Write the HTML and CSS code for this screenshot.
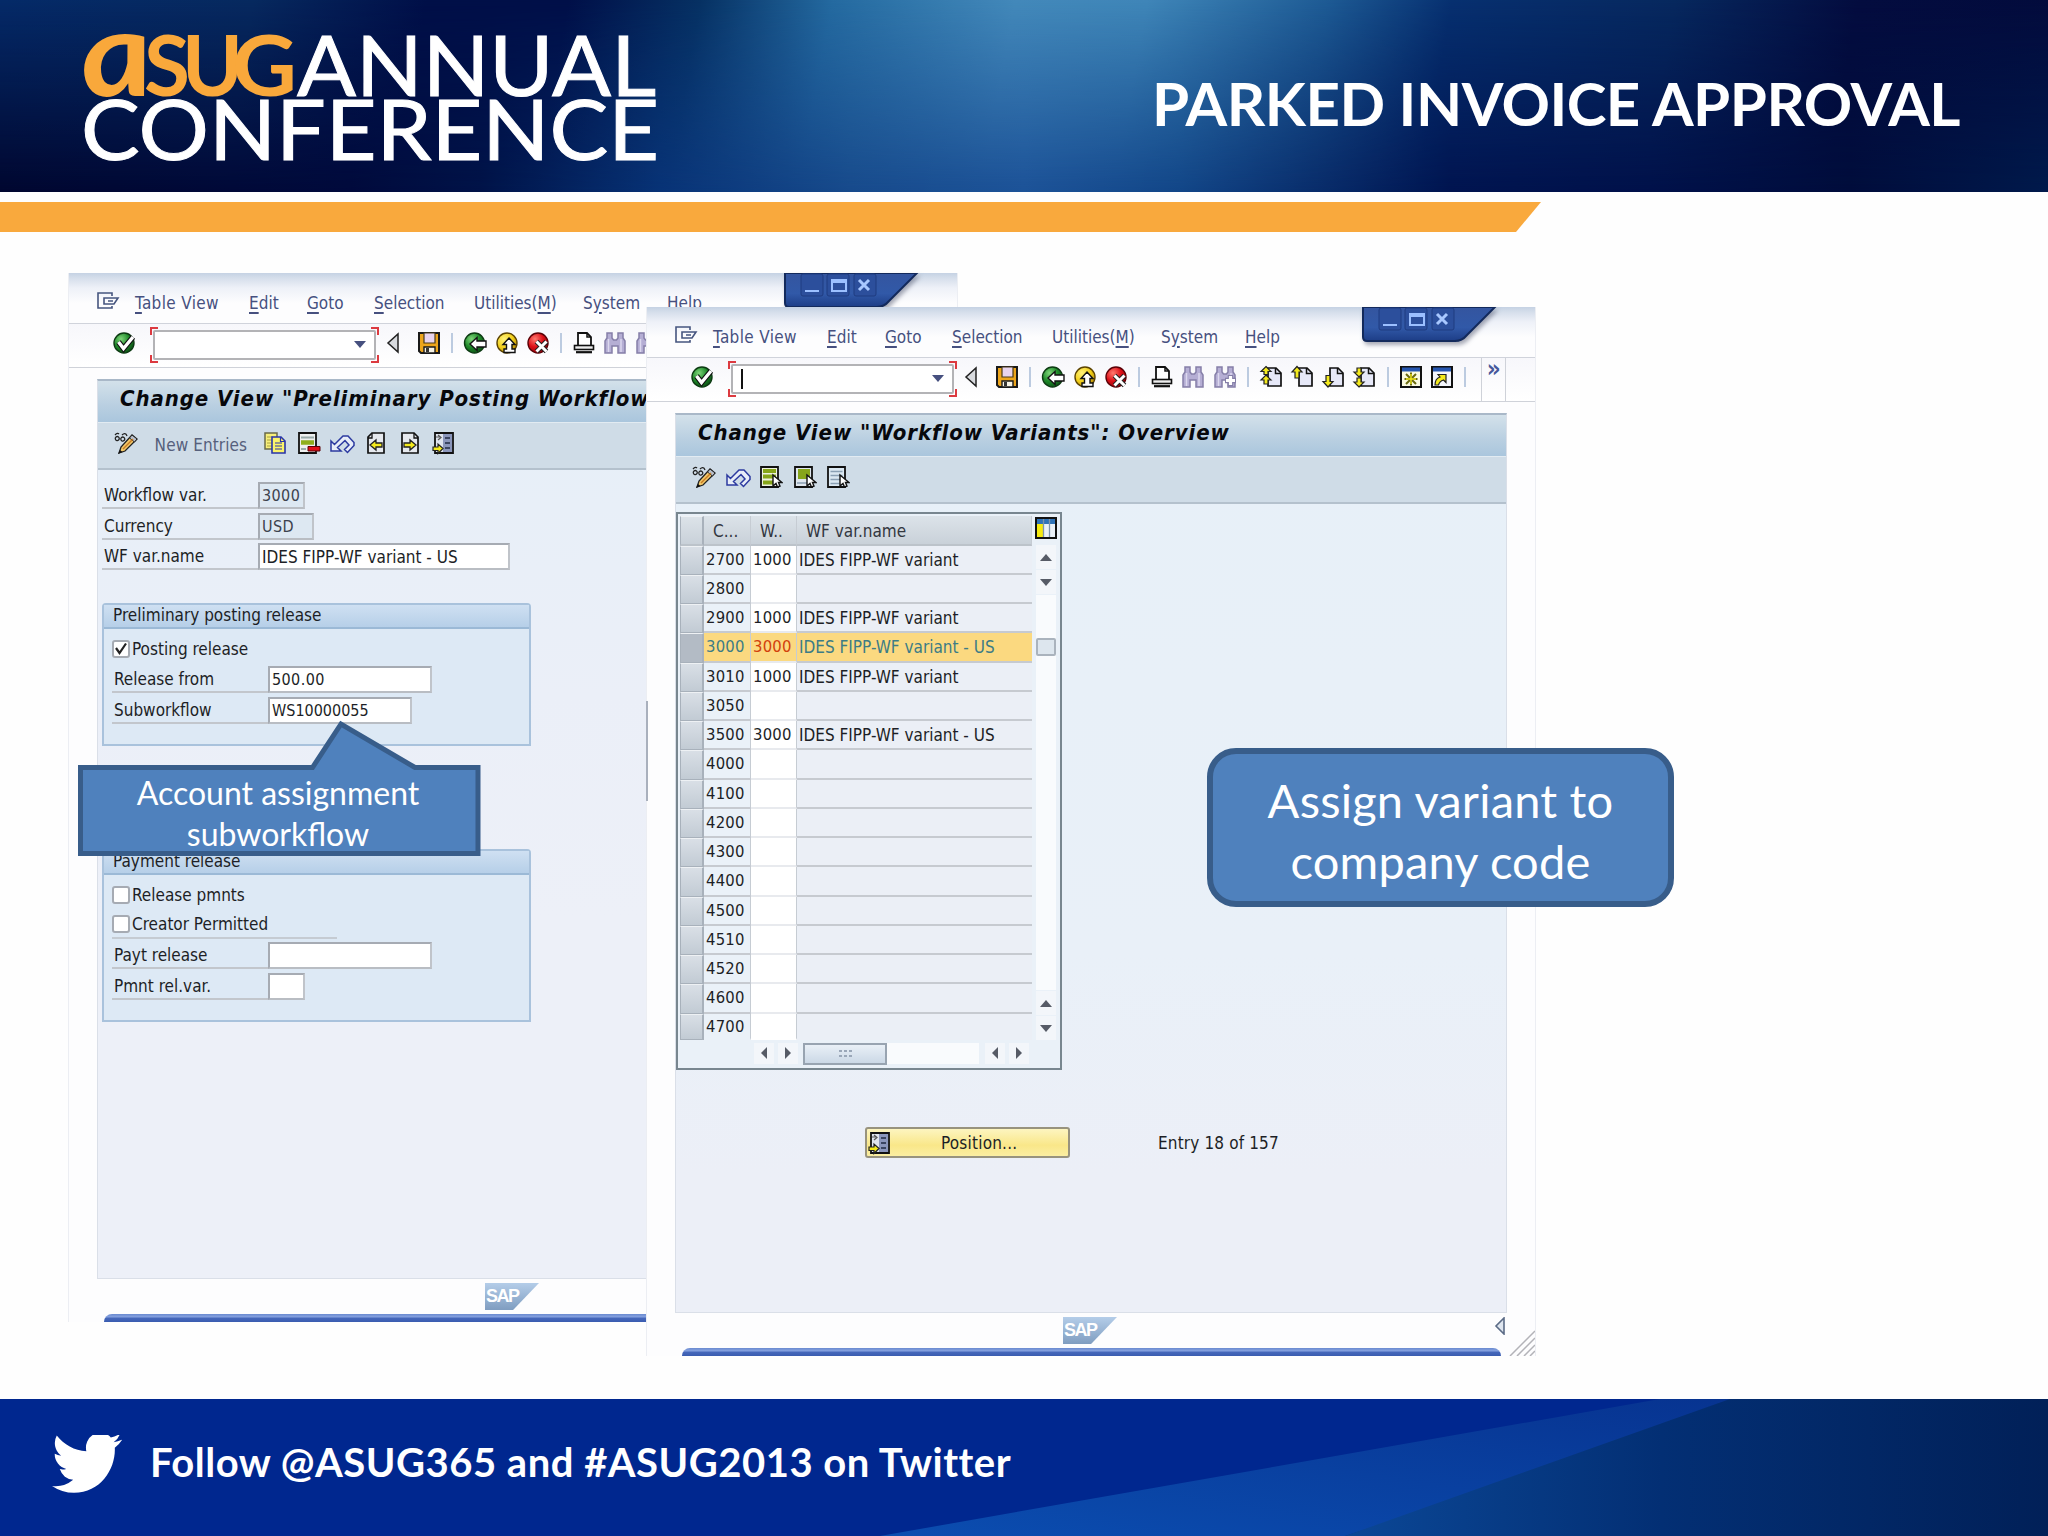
FILE: index.html
```html
<!DOCTYPE html>
<html lang="en">
<head>
<meta charset="utf-8">
<title>Parked Invoice Approval</title>
<link rel="stylesheet" href="styles.css">
</head>
<body>
<svg class="defs" width="0" height="0" aria-hidden="true">
  <defs>
    <radialGradient id="g-green" cx=".35" cy=".3" r=".8"><stop offset="0" stop-color="#7fd67a"/><stop offset=".5" stop-color="#1f8a2a"/><stop offset="1" stop-color="#0a4a12"/></radialGradient>
    <radialGradient id="g-yellow" cx=".35" cy=".3" r=".8"><stop offset="0" stop-color="#fff27a"/><stop offset=".55" stop-color="#f2cf1a"/><stop offset="1" stop-color="#a87a00"/></radialGradient>
    <radialGradient id="g-red" cx=".35" cy=".3" r=".8"><stop offset="0" stop-color="#ff7a70"/><stop offset=".5" stop-color="#dd1018"/><stop offset="1" stop-color="#8a0008"/></radialGradient>
    <linearGradient id="g-tab" x1="0" y1="0" x2="0" y2="1"><stop offset="0" stop-color="#34559f"/><stop offset=".6" stop-color="#3159a8"/><stop offset="1" stop-color="#1d3d86"/></linearGradient>
    <linearGradient id="g-sap" x1="0" y1="0" x2="0" y2="1"><stop offset="0" stop-color="#b4cde9"/><stop offset="1" stop-color="#7f9dc0"/></linearGradient>
  </defs>
  <symbol id="i-menu" viewBox="0 0 24 20"><path d="M16 5V2H2v15h14v-2M8 7h14l-4 6H8zM12 10h5" fill="none" stroke="#46557f" stroke-width="1.6"/></symbol>
  <symbol id="i-ok" viewBox="0 0 24 24"><circle cx="12" cy="12" r="10" fill="url(#g-green)" stroke="#0c3a12" stroke-width="1.4"/><path d="M6.500 11l5 6.500L21 6" fill="none" stroke="#111" stroke-width="5.500"/><path d="M6.500 11l5 6.500L21 6" fill="none" stroke="#fff" stroke-width="3.400"/></symbol>
  <symbol id="i-tri" viewBox="0 0 14 22"><path d="M12 2v18L2 11z" fill="#d8dade" stroke="#222" stroke-width="1.500"/></symbol>
  <symbol id="i-save" viewBox="0 0 24 24"><path d="M2 2h20v20H4l-2-2z" fill="#eda51c" stroke="#1a1a1a" stroke-width="2"/><path d="M7 2h11v10H7z" fill="#e8d4ee" stroke="#4a3a1a" stroke-width="1.200"/><path d="M7 16h11v6H7z" fill="#f7f3e6" stroke="#1a1a1a" stroke-width="1.400"/><path d="M9 17h3v4H9z" fill="#333"/></symbol>
  <symbol id="i-back" viewBox="0 0 24 24"><circle cx="11.500" cy="12" r="10" fill="url(#g-green)" stroke="#0c3a12" stroke-width="1.400"/><path d="M7 13l7-6.500V10h9v6h-9v3.500z" fill="#fff" stroke="#111" stroke-width="1.400"/></symbol>
  <symbol id="i-up" viewBox="0 0 24 24"><circle cx="12" cy="12" r="10" fill="url(#g-yellow)" stroke="#5b4300" stroke-width="1.400"/><path d="M14 7l6 6.500h-3V18h3v3.500H9V18h2.500v-4.500H8z" fill="#fff" stroke="#111" stroke-width="1.400"/></symbol>
  <symbol id="i-cancel" viewBox="0 0 24 24"><circle cx="12" cy="12" r="10" fill="url(#g-red)" stroke="#5a0006" stroke-width="1.400"/><path d="M10.500 10.500l10 10M20.500 10.500l-10 10" stroke="#222" stroke-width="5"/><path d="M10.500 10.500l10 10M20.500 10.500l-10 10" stroke="#fff" stroke-width="3"/></symbol>
  <symbol id="i-print" viewBox="0 0 24 24"><path d="M6 2h9l4 4v9H6z" fill="#fff" stroke="#111" stroke-width="1.800"/><path d="M15 2v4h4" fill="none" stroke="#111" stroke-width="1.500"/><rect x="2.500" y="14.500" width="19" height="4" fill="#eee" stroke="#111" stroke-width="1.600"/><path d="M4 21.200h16" stroke="#111" stroke-width="2.200"/></symbol>
  <symbol id="i-find" viewBox="0 0 24 24"><path d="M4 2h5v5l1.500 2h3L15 7V2h5v5l2 3v12h-7v-7H9v7H2V10l2-3z" fill="#b5aed4" stroke="#857fa8" stroke-width="1.500"/><path d="M5.500 8v13M18 8v13" stroke="#dcd8ee" stroke-width="1.500"/></symbol>
  <symbol id="i-findnext" viewBox="0 0 24 24"><use href="#i-find"/><path d="M17.500 10v11M12 15.500h11" stroke="#857fa8" stroke-width="5.500"/><path d="M17.500 11v9M13 15.500h9" stroke="#fff" stroke-width="3.200"/></symbol>
  <symbol id="i-sheet" viewBox="0 0 24 24"><path d="M9 3h8l5 5v13H9z" fill="#e6e8f8" stroke="#111" stroke-width="1.700"/><path d="M16.500 3v5.500H22" fill="none" stroke="#111" stroke-width="1.500"/></symbol>
  <symbol id="i-p1" viewBox="0 0 24 24"><use href="#i-sheet"/><path d="M7 1.500l5 5H9v3H5v-3H2zM7 10l5 5H9v4H5v-4H2z" fill="#f4ea1c" stroke="#222" stroke-width="1.200"/></symbol>
  <symbol id="i-p2" viewBox="0 0 24 24"><use href="#i-sheet"/><path d="M7 1.500l5 5.500H9v6H5V7H2z" fill="#f4ea1c" stroke="#222" stroke-width="1.200"/></symbol>
  <symbol id="i-p3" viewBox="0 0 24 24"><use href="#i-sheet"/><path d="M7 22l5-5.500H9v-6H5v6H2z" fill="#f4ea1c" stroke="#222" stroke-width="1.200"/></symbol>
  <symbol id="i-p4" viewBox="0 0 24 24"><use href="#i-sheet"/><path d="M7 12l5-5H9V3H5v4H2zM7 22l5-5H9v-4H5v4H2z" fill="#f4ea1c" stroke="#222" stroke-width="1.200"/></symbol>
  <symbol id="i-w1" viewBox="0 0 24 24"><path d="M2 2h20v20H2z" fill="#fbfbe0" stroke="#111" stroke-width="2"/><path d="M3 4.500h18" stroke="#2656b0" stroke-width="4"/><path d="M12 7.500v13M5.500 14h13M7 9l10 10M17 9L7 19" stroke="#6a6a10" stroke-width="2"/><path d="M12 9v10M7 14h10" stroke="#f4ea1c" stroke-width="1.400"/></symbol>
  <symbol id="i-w2" viewBox="0 0 24 24"><path d="M2 2h20v20H2z" fill="#f4f6fc" stroke="#111" stroke-width="2"/><path d="M3 4.500h18" stroke="#2656b0" stroke-width="4"/><path d="M5 20c0-5 2-7 5-8L8 9.500h8v8L13.500 15C10 16 9 18 8.500 20z" fill="#f4ea1c" stroke="#222" stroke-width="1.200"/></symbol>
  <symbol id="i-pencil" viewBox="0 0 26 24"><path d="M2 4c2-2 3-2 4-1M2.500 8.500a2 2 0 1 0 3-2.500 2 2 0 0 0-3 2.500M8 9a2 2 0 1 0 3-2.500A2 2 0 0 0 8 9M9 4c2-2 4-2 5 1" fill="none" stroke="#222" stroke-width="1.300"/><path d="M6 22l2-6L19 4l5 4-12 12z" fill="#f3c96a" stroke="#222" stroke-width="1.300"/><path d="M19 4l5 4-2.500 3-5-4z" fill="#b9c0cc" stroke="#222"/><path d="M10 18L20 8" stroke="#c87b22" stroke-width="1.500"/><path d="M5 23l2-4 2.500 2z" fill="#111"/></symbol>
  <symbol id="i-copy" viewBox="0 0 24 24"><path d="M2 2h12v16H2z" fill="#f7ef7a" stroke="#6a6a4a" stroke-width="1.500"/><path d="M4 6h6M4 9h6M4 12h6M4 15h5" stroke="#a8a040"/><path d="M9 6h9l4 4v12H9z" fill="#fbf36a" stroke="#2a35a8" stroke-width="1.600"/><path d="M17.500 6v4.500H22M12 12h7M12 15h7M12 18h7" fill="none" stroke="#2a35a8" stroke-width="1.200"/></symbol>
  <symbol id="i-del" viewBox="0 0 24 24"><path d="M2 2h17v20H2z" fill="#eef0f0" stroke="#111" stroke-width="1.800"/><path d="M4 6.500h13" stroke="#9aa" stroke-width="2"/><path d="M4 11.500h13" stroke="#8fae1c" stroke-width="4.500"/><path d="M4 18h5" stroke="#9aa" stroke-width="2"/><path d="M11 15.500h12v4.500H11z" fill="#e01018" stroke="#5a0006"/></symbol>
  <symbol id="i-undo" viewBox="0 0 26 24"><path d="M2 10v10h10l-3.500-3.500L16 9.500l4 4.500-4.500 4.500 3 3L25 14.500v-3L19 5h-5L5.500 13.500z" fill="#e8edf8" stroke="#2c3aa0" stroke-width="1.500"/></symbol>
  <symbol id="i-prev" viewBox="0 0 24 24"><path d="M4 6l4-4h12v20H4z" fill="#e6e9ee" stroke="#111" stroke-width="1.700"/><path d="M4 7h4V2" fill="none" stroke="#111" stroke-width="1.300"/><path d="M6 14l6-5v3h6v4h-6v3z" fill="#f4ea1c" stroke="#222" stroke-width="1.300"/></symbol>
  <symbol id="i-next" viewBox="0 0 24 24"><path d="M4 2h12l4 4v16H4z" fill="#e6e9ee" stroke="#111" stroke-width="1.700"/><path d="M20 7h-4V2" fill="none" stroke="#111" stroke-width="1.300"/><path d="M18 14l-6-5v3H6v4h6v3z" fill="#f4ea1c" stroke="#222" stroke-width="1.300"/></symbol>
  <symbol id="i-pos" viewBox="0 0 24 24"><path d="M4 2h18v20H4z" fill="#dfe4ee" stroke="#111" stroke-width="1.800"/><path d="M12 3h9v18h-9z" fill="#8b96bb"/><path d="M14 7h5M14 12h5M14 17h5" stroke="#222b44" stroke-width="1.600"/><path d="M5 6h5M7 4l3 2.500L7 9" fill="none" stroke="#555" stroke-width="1.200"/><path d="M12 17.500l-5-4.500v3H2v3.500h5v3z" fill="#f4ea1c" stroke="#222" stroke-width="1.200"/></symbol>
  <symbol id="i-cursor" viewBox="0 0 24 24"><path d="M14 10v11l3-2.500 1.500 3.500 2.500-1-1.500-3.500H23z" fill="#fff" stroke="#111" stroke-width="1.400"/></symbol>
  <symbol id="i-s1" viewBox="0 0 24 24"><path d="M2 2h17v20H2z" fill="#eef2e0" stroke="#111" stroke-width="1.800"/><path d="M4 6h13M4 11.500h13M4 17.500h13" stroke="#86a51a" stroke-width="4"/><use href="#i-cursor"/></symbol>
  <symbol id="i-s2" viewBox="0 0 24 24"><path d="M2 2h17v20H2z" fill="#dfe6ee" stroke="#111" stroke-width="1.800"/><path d="M5 4h12v10H5z" fill="#86a51a"/><path d="M4 18h10" stroke="#9fb0c0" stroke-width="2"/><use href="#i-cursor"/></symbol>
  <symbol id="i-s3" viewBox="0 0 24 24"><path d="M2 2h17v20H2z" fill="#dbe8f2" stroke="#111" stroke-width="1.800"/><path d="M4.500 6.500h12M4.500 10.500h12M4.500 14.500h12M4.500 18.500h9" stroke="#8aa0b4" stroke-width="1.500"/><use href="#i-cursor"/></symbol>
  <symbol id="i-cols" viewBox="0 0 22 22"><path d="M1 1h20v20H1z" fill="#eaf1f8" stroke="#111" stroke-width="2"/><path d="M2 4.500h18" stroke="#2f73b8" stroke-width="5"/><path d="M2 7h6v13H2z" fill="#f6ea10"/><path d="M8.500 2v18M14.500 2v18" stroke="#7d94ab" stroke-width="1.300"/></symbol>
  <symbol id="i-controls" viewBox="0 0 136 38">
    <path d="M2 0h132L106 28q-5 6-12 6H6q-4 0-4-4z" fill="url(#g-tab)" stroke="#132a5c" stroke-width="2"/>
    <g fill="#2c4f9c" stroke="#1f3c80"><rect x="18" y="1" width="22" height="22" rx="2"/><rect x="44" y="1" width="22" height="22" rx="2"/><rect x="71" y="1" width="22" height="22" rx="2"/></g>
    <path d="M22 18h14M49 7h14v11H49zM49 9h14" fill="none" stroke="#9cc0ff" stroke-width="2"/>
    <path d="M76 7l10 10M86 7L76 17" stroke="#a9c8ff" stroke-width="3"/>
  </symbol>
</svg>

<header class="banner">
  <svg class="logo" width="580" height="140" viewBox="0 0 580 140">
    <g font-family="Lato" fill="#f9a83b">
      <text transform="translate(1 75) skewX(8)" font-size="119" font-style="italic" font-weight="700" textLength="72" lengthAdjust="spacingAndGlyphs">a</text>
      <text x="60" y="75" font-size="84" font-weight="700" textLength="46" lengthAdjust="spacingAndGlyphs">S</text>
      <text x="98" y="75" font-size="84" font-weight="700" textLength="61" lengthAdjust="spacingAndGlyphs">U</text>
      <text x="148" y="75" font-size="84" font-weight="700" textLength="65" lengthAdjust="spacingAndGlyphs">G</text>
    </g>
    <g font-family="Lato" fill="#fff" stroke="#fff" stroke-width="1">
      <text x="213" y="75" font-size="83" textLength="359" lengthAdjust="spacingAndGlyphs">ANNUAL</text>
      <text x="-3" y="139" font-size="83" textLength="578" lengthAdjust="spacingAndGlyphs">CONFERENCE</text>
    </g>
  </svg>
  <h1>PARKED INVOICE APPROVAL</h1>
</header>
<div class="stripe"></div>

<main class="slide">
  <section class="win win-a">
    <svg class="controls" width="136" height="38"><use href="#i-controls"/></svg>
    <nav class="menu">
      <svg width="24" height="20"><use href="#i-menu"/></svg>
      <span class="m1"><u>T</u>able View</span><span><u>E</u>dit</span><span><u>G</u>oto</span><span><u>S</u>election</span><span>Utilities(<u>M</u>)</span><span>S<u>y</u>stem</span><span><u>H</u>elp</span>
    </nav>
    <div class="bar">
      <svg class="ic"><use href="#i-ok"/></svg>
      <div class="cmd"><i class="corner tl"></i><i class="corner tr"></i><i class="corner bl"></i><i class="corner br"></i><div class="cmd-box"><b class="dd"></b></div></div>
      <svg class="tri" width="14" height="22"><use href="#i-tri"/></svg>
      <div class="tools">
        <svg class="ic"><use href="#i-save"/></svg><i class="sep"></i>
        <svg class="ic"><use href="#i-back"/></svg><svg class="ic"><use href="#i-up"/></svg><svg class="ic"><use href="#i-cancel"/></svg><i class="sep"></i>
        <svg class="ic"><use href="#i-print"/></svg><svg class="ic"><use href="#i-find"/></svg><svg class="ic"><use href="#i-findnext"/></svg>
      </div>
    </div>
    <div class="panel">
      <h2>Change View "Preliminary Posting Workflow</h2>
      <div class="apps">
        <svg width="26" height="24"><use href="#i-pencil"/></svg>
        <span class="new">New Entries</span>
        <svg class="ic"><use href="#i-copy"/></svg><svg class="ic"><use href="#i-del"/></svg><svg width="26" height="24" class="wide"><use href="#i-undo"/></svg><svg class="ic"><use href="#i-prev"/></svg><svg class="ic"><use href="#i-next"/></svg><svg class="ic"><use href="#i-pos"/></svg>
      </div>
      <div class="form">
        <div class="row"><label>Workflow var.</label><div class="in ro num w47">3000</div></div>
        <div class="row"><label>Currency</label><div class="in ro num w56">USD</div></div>
        <div class="row"><label>WF var.name</label><div class="in w252">IDES FIPP-WF variant - US</div></div>
        <fieldset class="g1">
          <div class="cap">Preliminary posting release</div>
          <div class="check"><i class="box"><svg width="14" height="14" viewBox="0 0 14 14"><path d="M2 6l3.500 5L12 1.500" fill="none" stroke="#222" stroke-width="2.200"/></svg></i>Posting release</div>
          <div class="row"><label>Release from</label><div class="in num w164">500.00</div></div>
          <div class="row"><label>Subworkflow</label><div class="in num ws w144">WS10000055</div></div>
        </fieldset>
        <fieldset class="g2">
          <div class="cap">Payment release</div>
          <div class="check"><i class="box"></i>Release pmnts</div>
          <div class="check ul"><i class="box"></i>Creator Permitted</div>
          <div class="row"><label>Payt release</label><div class="in w164"></div></div>
          <div class="row"><label>Pmnt rel.var.</label><div class="in w37"></div></div>
        </fieldset>
      </div>
    </div>
    <footer class="status"><div class="sap">SAP</div></footer>
    <div class="edge"></div>
  </section>

  <section class="win win-b">
    <i class="splitter"></i>
    <svg class="controls" width="136" height="38"><use href="#i-controls"/></svg>
    <nav class="menu">
      <svg width="24" height="20"><use href="#i-menu"/></svg>
      <span class="m1"><u>T</u>able View</span><span><u>E</u>dit</span><span><u>G</u>oto</span><span><u>S</u>election</span><span>Utilities(<u>M</u>)</span><span>S<u>y</u>stem</span><span><u>H</u>elp</span>
    </nav>
    <div class="bar">
      <svg class="ic"><use href="#i-ok"/></svg>
      <div class="cmd"><i class="corner tl"></i><i class="corner tr"></i><i class="corner bl"></i><i class="corner br"></i><div class="cmd-box"><i class="caret"></i><b class="dd"></b></div></div>
      <svg class="tri" width="14" height="22"><use href="#i-tri"/></svg>
      <div class="tools">
        <svg class="ic"><use href="#i-save"/></svg><i class="sep"></i>
        <svg class="ic"><use href="#i-back"/></svg><svg class="ic"><use href="#i-up"/></svg><svg class="ic"><use href="#i-cancel"/></svg><i class="sep"></i>
        <svg class="ic"><use href="#i-print"/></svg><svg class="ic"><use href="#i-find"/></svg><svg class="ic"><use href="#i-findnext"/></svg><i class="sep"></i>
        <svg class="ic"><use href="#i-p1"/></svg><svg class="ic"><use href="#i-p2"/></svg><svg class="ic"><use href="#i-p3"/></svg><svg class="ic"><use href="#i-p4"/></svg><i class="sep"></i>
        <svg class="ic"><use href="#i-w1"/></svg><svg class="ic"><use href="#i-w2"/></svg><i class="sep"></i>
      </div>
      <div class="more">»</div>
    </div>
    <div class="panel">
      <h2>Change View "Workflow Variants": Overview</h2>
      <div class="apps">
        <svg width="26" height="24"><use href="#i-pencil"/></svg><svg width="26" height="24" class="wide"><use href="#i-undo"/></svg><svg class="ic"><use href="#i-s1"/></svg><svg class="ic"><use href="#i-s2"/></svg><svg class="ic"><use href="#i-s3"/></svg>
      </div>
      <div class="grid">
        <div class="rows">
          <div class="r head"><i></i><b>C...</b><b>W..</b><b>WF var.name</b></div>
          <div class="r"><i></i><b>2700</b><b>1000</b><span>IDES FIPP-WF variant</span></div>
          <div class="r"><i></i><b>2800</b><b></b><span></span></div>
          <div class="r"><i></i><b>2900</b><b>1000</b><span>IDES FIPP-WF variant</span></div>
          <div class="r sel"><i></i><b>3000</b><b>3000</b><span>IDES FIPP-WF variant - US</span></div>
          <div class="r"><i></i><b>3010</b><b>1000</b><span>IDES FIPP-WF variant</span></div>
          <div class="r"><i></i><b>3050</b><b></b><span></span></div>
          <div class="r"><i></i><b>3500</b><b>3000</b><span>IDES FIPP-WF variant - US</span></div>
          <div class="r"><i></i><b>4000</b><b></b><span></span></div>
          <div class="r"><i></i><b>4100</b><b></b><span></span></div>
          <div class="r"><i></i><b>4200</b><b></b><span></span></div>
          <div class="r"><i></i><b>4300</b><b></b><span></span></div>
          <div class="r"><i></i><b>4400</b><b></b><span></span></div>
          <div class="r"><i></i><b>4500</b><b></b><span></span></div>
          <div class="r"><i></i><b>4510</b><b></b><span></span></div>
          <div class="r"><i></i><b>4520</b><b></b><span></span></div>
          <div class="r"><i></i><b>4600</b><b></b><span></span></div>
          <div class="r last"><i></i><b>4700</b><b></b><span></span></div>
        </div>
        <div class="vbar">
          <svg width="24" height="24" viewBox="-1 -1 24 24"><use href="#i-cols" width="22" height="22"/></svg>
          <div class="btn"><i class="a up"></i></div><div class="btn"><i class="a down"></i></div>
          <div class="vtrack"><div class="vthumb"></div></div>
          <div class="btn"><i class="a up"></i></div><div class="btn"><i class="a down"></i></div>
        </div>
        <div class="hbar">
          <div class="btn"><i class="a left"></i></div><div class="btn"><i class="a right"></i></div>
          <div class="htrack"><div class="hthumb"><svg width="14" height="10" viewBox="0 0 14 10"><path d="M1 2h3M6 2h3M11 2h3M1 7h3M6 7h3M11 7h3" stroke="#9aa7b8" stroke-width="2"/></svg></div></div>
          <div class="btn"><i class="a left"></i></div><div class="btn"><i class="a right"></i></div>
        </div>
      </div>
      <div class="foot">
        <div class="position"><svg width="24" height="24"><use href="#i-pos"/></svg><span>Position...</span></div>
        <span>Entry 18 of 157</span>
      </div>
    </div>
    <footer class="status"><div class="sap">SAP</div><svg width="12" height="18" viewBox="0 0 12 18"><path d="M10 1v16L2 9z" fill="#dfe6ef" stroke="#5b6b86" stroke-width="1.600"/></svg></footer>
    <div class="edge"></div>
    <svg class="grip" width="26" height="26" viewBox="0 0 26 26"><path d="M1 26L26 1M8 26L26 8M15 26L26 15M21 26l5-5" stroke="#b3b3b8" stroke-width="1.500"/></svg>
  </section>

  <div class="callout">
    <svg width="404" height="138" viewBox="0 0 404 138"><path d="M2.500 48.500H234.500L263 5l74 43.500H400V134.500H2.500z" fill="#4f81bd" stroke="#385d8a" stroke-width="5"/></svg>
    <p>Account assignment<br>subworkflow</p>
  </div>
  <div class="bubble"><p>Assign variant to<br>company code</p></div>
</main>

<footer class="follow">
  <svg class="rays" width="2048" height="137" viewBox="0 0 2048 137" preserveAspectRatio="none">
    <defs>
      <linearGradient id="r1" x1="0" x2="1" y1="1" y2="0"><stop offset="0" stop-color="#0b4db0"/><stop offset="1" stop-color="#073390"/></linearGradient>
      <linearGradient id="r2" x1="0" x2="1"><stop offset="0" stop-color="#0b4796"/><stop offset=".45" stop-color="#032f74"/><stop offset="1" stop-color="#012058"/></linearGradient>
    </defs>
    <path d="M880 137L1660 0h100L1345 137z" fill="url(#r1)"/>
    <path d="M1345 137L1730 0h318v137z" fill="url(#r2)"/>
  </svg>
  <svg class="bird" width="70" height="60" viewBox="0 3 24 19.500" preserveAspectRatio="none"><path fill="#fff" d="M23.950 4.570a10 10 0 0 1-2.820.770 4.960 4.960 0 0 0 2.160-2.720c-.950.560-2 .960-3.130 1.180a4.920 4.920 0 0 0-8.390 4.480C7.690 8.100 4.070 6.130 1.640 3.160a4.820 4.820 0 0 0-.670 2.480c0 1.710.870 3.210 2.190 4.100a4.900 4.900 0 0 1-2.230-.620v.060a4.920 4.920 0 0 0 3.950 4.830 5 5 0 0 1-2.210.080 4.940 4.940 0 0 0 4.600 3.420A9.870 9.870 0 0 1 0 19.540a13.990 13.990 0 0 0 7.550 2.210c9.050 0 14-7.500 14-13.980 0-.210 0-.420-.020-.630a9.940 9.940 0 0 0 2.460-2.550z"/></svg>
  <span>Follow @ASUG365 and #ASUG2013 on Twitter</span>
</footer>
</body>
</html>
```
FILE: styles.css
```css
* { box-sizing: border-box; }
body {
  margin: 0;
  width: 2048px;
  height: 1536px;
  display: flex;
  flex-direction: column;
  overflow: hidden;
  background: #fefefe;
  font-family: "DejaVu Sans Condensed", "DejaVu Sans", sans-serif;
  font-size: 17px;
  color: #1d1f26;
}
.defs { position: absolute; }
svg { display: block; flex: none; }
i, b { font-style: normal; font-weight: 400; }
.ic { width: 24px; height: 24px; }

/* Banner */
.banner {
  position: relative;
  flex: none;
  height: 192px;
  display: flex;
  justify-content: space-between;
  padding: 21px 88px 0 84px;
  background: linear-gradient(90deg, #000730 0, #000a3c 350px, #001348 480px, #083377 660px, #174a8c 850px, #1c5298 1024px, #124688 1180px, #082a68 1330px, #001450 1450px, #00114a 1650px, #000d3c 1850px, #001a4c 2048px);
}
.banner::before {
  content: "";
  position: absolute;
  inset: 0;
  background: linear-gradient(100deg, #042a68 0, #06295f 250px, #000f48 420px, #000f48 560px, #063163 690px, #246aa0 820px, #4389ba 1000px, #3f86b8 1130px, #1d5a94 1310px, #063070 1430px, #06285e 1650px, #030c3f 1830px, #020b3c 2048px);
  -webkit-mask-image: linear-gradient(#000, transparent);
  mask-image: linear-gradient(#000, transparent);
}
.logo { position: relative; overflow: visible; }
.banner h1 {
  position: relative;
  margin: 0;
  padding-top: 42px;
  font: 700 60px/80px Lato, sans-serif;
  letter-spacing: -0.5px;
  color: #fff;
}
.stripe {
  flex: none;
  width: 1541px;
  height: 30px;
  margin-top: 10px;
  background: #f9a93d;
  clip-path: polygon(0 0, 100% 0, 1516px 100%, 0 100%);
}
.slide { flex: 1; }

/* Application windows */
.win {
  position: absolute;
  width: 890px;
  height: 1049px;
  display: flex;
  flex-direction: column;
  background: linear-gradient(#c5d2e3 0, #d5deeb 5px, #eef1f8 15px, #fdfdfe 30px, #fdfdfe 100%);
  border-left: 1px solid #eceef3;
  border-right: 1px solid #eceef3;
}
.win-a { left: 68px; top: 273px; }
.win-b { left: 646px; top: 307px; }
.controls { position: absolute; left: 714px; top: 0; filter: drop-shadow(2px 3px 2px rgba(80, 85, 110, .5)); }
.splitter { position: absolute; left: -1px; top: 394px; width: 2px; height: 100px; background: #a9b0bd; }

.menu {
  flex: none;
  height: 51px;
  display: grid;
  grid-template-columns: 39px 114px 58px 67px 100px 109px 84px auto;
  align-items: center;
  padding: 9px 0 0 27px;
  color: #46507f;
  border-bottom: 1px solid #d0d3db;
}
.menu svg { margin-top: -4px; }
.menu u { text-underline-offset: 3px; text-decoration-thickness: 1.500px; }
.m1 { letter-spacing: .35px; }

.bar {
  flex: none;
  height: 44px;
  display: flex;
  align-items: center;
  padding: 0 0 5px 43px;
  background: linear-gradient(#f7f7fb, #fff);
  border-bottom: 1px solid #cfd2d9;
}
.cmd { position: relative; width: 229px; height: 36px; margin: 3px 0 0 14px; padding: 3px; }
.cmd-box {
  height: 30px;
  display: flex;
  align-items: center;
  padding: 0 8px;
  background: #fff;
  border: 2px solid #b3b3b6;
  border-radius: 2px;
}
.caret { width: 2px; height: 20px; background: #111; }
.dd { margin-left: auto; border: 6px solid transparent; border-top: 7px solid #46507f; border-bottom: 0; }
.corner { position: absolute; width: 8px; height: 8px; border: 0 solid #dc3a40; }
.tl { left: 0; top: 0; border-width: 2px 0 0 2px; }
.tr { right: 0; top: 0; border-width: 2px 2px 0 0; }
.bl { left: 0; bottom: 0; border-width: 0 0 2px 2px; }
.br { right: 0; bottom: 0; border-width: 0 2px 2px 0; }
.bar .tri { margin-left: 7px; }
.tools { display: flex; align-items: center; gap: 7.200px; margin-left: 17px; }
.sep { width: 2px; height: 20px; margin: 0 3px; background: #bccbe0; }
.more {
  width: 25px;
  height: 43px;
  margin: 5px 0 0 12px;
  border: 1px solid #cfd2d9;
  border-width: 0 1px;
  text-align: center;
  font: 700 24px/22px "DejaVu Sans Condensed", sans-serif;
  color: #46579a;
}

.panel {
  flex: none;
  width: 832px;
  height: 900px;
  margin: 11px 0 0 28px;
  display: flex;
  flex-direction: column;
  background: linear-gradient(#e6eff8, #ebeff8 35%, #edf0f8 60%);
  border: 1px solid #dadfe8;
  border-top: 2px solid #a9b8c8;
}
.win-b .panel { background: linear-gradient(#e7f0f8, #e9f0f8 60%, #eceff7 85%); }
.panel h2 {
  flex: none;
  margin: 0;
  height: 42px;
  padding-left: 22px;
  font-size: 22px;
  letter-spacing: .92px;
  line-height: 36px;
  font-weight: 700;
  font-style: oblique;
  color: #07080c;
  white-space: nowrap;
  background: linear-gradient(#d3e1ea, #b9cfe1 60%, #aac6dd);
  border-bottom: 1px solid #e2ebf2;
}
.apps {
  flex: none;
  height: 47px;
  display: flex;
  align-items: center;
  gap: 9.600px;
  padding: 0 0 5px 15px;
  background: #cfdce7;
  border-bottom: 2px solid #b4c1cd;
}
.apps .wide { margin: 0 -1px; }
.win-b .apps .wide { margin-left: -2px; }
.new { width: 99px; margin: 3px 0 0 6px; padding-right: 1px; color: #56607c; white-space: nowrap; letter-spacing: .1px; }

/* Form */
.form { padding: 12px 0 0 4px; }
.row { display: flex; align-items: stretch; height: 27px; margin-bottom: 3.700px; }
.row label { width: 156px; padding-left: 2px; line-height: 27px; border-bottom: 2px solid #c2c6cc; }
.in {
  height: 27px;
  padding-left: 2px;
  line-height: 24px;
  background: #fff;
  border: 2px solid #a6abb3;
  border-right-color: #c0c4ca;
  border-bottom-color: #b9bdc3;
}
.ro { background: #dde8f2; color: #3c424d; }
.num { font-size: 16px; letter-spacing: .4px; line-height: 23px; }
.ws { letter-spacing: 0; }
.w37 { width: 37px; } .w47 { width: 47px; } .w56 { width: 56px; } .w144 { width: 144px; } .w164 { width: 164px; } .w252 { width: 252px; }
fieldset { margin: 0; width: 429px; padding: 0 8px; border: 2px solid #a9c2dc; border-radius: 4px 4px 0 0; background: #dde9f5; }
.g1 { height: 143px; margin-top: 33px; }
.g2 { height: 173px; margin-top: 103px; }
.cap { height: 24px; margin: 0 -8px 7px; padding-left: 9px; line-height: 20px; background: linear-gradient(#cfe0f2, #b6cfe8); border-bottom: 2px solid #9bb9d6; }
.check { display: flex; align-items: center; gap: 2px; height: 26px; margin-bottom: 3.500px; }
.box { width: 18px; height: 18px; display: grid; place-items: center; background: #fff; border: 2px solid #a6abb3; border-radius: 3px; }
.check.ul { width: 225px; height: 27px; margin: 1px 0 3px; border-bottom: 2px solid #c5cbd2; }

/* Variant table */
.grid {
  flex: none;
  width: 386px;
  height: 558px;
  margin: 8px 0 0 0;
  padding: 2px 0 0 2px;
  display: grid;
  grid-template-columns: 352px 26px;
  grid-template-rows: 524px 24px;
  column-gap: 1px;
  border: 2px solid #78868f;
  background: #eaf1f8;
}
.rows { display: flex; flex-direction: column; }
.r { display: grid; grid-template-columns: 24px 47px 46px 235px; grid-template-rows: 100%; height: 29.250px; flex: none; }
.r > * { min-height: 0; border-bottom: 2px solid #c6cad0; padding-left: 2px; line-height: 28px; white-space: nowrap; }
.r b { font-size: 16.500px; letter-spacing: .2px; border-right: 1px solid #c6ccd3; line-height: 27px; }
.r span { background: #ebeff6; border-right: 0; }
.r b:nth-child(3) { background: #fff; border-bottom-color: #e8eaee; }
.r i { background: linear-gradient(#d9dfe6, #c2cbd4); border: 1px solid #a8b1bb; border-top-color: #eef1f4; border-right-width: 2px; }
.r.head { height: 29.500px; }
.r.head > :nth-child(n) { background: linear-gradient(#dce3e9, #c9d1d9); border-bottom: 2px solid #bcc3ca; line-height: 30px; }
.r.head b { font-size: 17px; padding-left: 9px; letter-spacing: 0; color: #33373f; }
.r.sel b, .r.sel span { background: #fbd980; color: #3d7c86; }
.r.sel b:nth-child(3) { background: #fbd980; color: #d2400c; }
.r.sel i { background: #b3bbc5; }
.r.last { height: 26.500px; }
.r.last > :nth-child(n) { border-bottom-color: transparent; line-height: 26px; }
.r.last > i:nth-child(1) { border-bottom-color: #a8b1bb; }
.vbar { display: flex; flex-direction: column; align-items: center; gap: 1px; margin-left: -1px; }
.btn { display: grid; place-items: center; width: 20px; height: 24px; background: #f3f6fa; }
.a { border: 6px solid transparent; }
.up { border-bottom: 7px solid #565b66; border-top: 0; }
.down { border-top: 7px solid #565b66; border-bottom: 0; }
.left { border-right: 6px solid #565b66; border-left: 0; }
.right { border-left: 6px solid #565b66; border-right: 0; }
.vbar > svg { margin-bottom: 4px; }
.vtrack { flex: 1; width: 20px; padding-top: 43px; background: #f9fbfd; }
.vthumb { height: 18px; background: #dde6ee; border: 2px solid #aab3bd; border-radius: 2px; }
.hbar { grid-column: 1 / -1; display: flex; align-items: center; gap: 4px; padding: 2px 0 0 74px; }
.hbar .btn { height: 21px; }
.htrack { width: 176px; height: 21px; margin: 0 2px 0 1px; background: #f9fbfd; }
.hthumb { width: 84px; height: 22px; display: grid; place-items: center; background: linear-gradient(#e9f0f7, #cbd8e6); border: 2px solid #98a4b1; }

.foot { display: flex; align-items: center; margin: 57px 0 0 189px; gap: 88px; }
.position {
  display: flex;
  align-items: center;
  width: 205px;
  height: 31px;
  background: linear-gradient(#fdf5c0, #f9e789 60%, #fbeea2);
  border: 2px solid #98937e;
  border-radius: 3px;
}
.position span { padding-left: 50px; letter-spacing: .2px; }
.foot > span { letter-spacing: .15px; }

.status { flex: none; height: 33px; display: flex; justify-content: space-between; padding: 4px 29px 0 416px; }
.sap {
  width: 54px;
  height: 27px;
  padding-left: 1px;
  background: linear-gradient(#b4cde9, #7f9dc0);
  clip-path: polygon(0 0, 100% 0, 52% 100%, 0 100%);
  font: 700 18px/27px "Liberation Sans Narrow", "Liberation Sans", sans-serif;
  letter-spacing: -1.500px;
  color: #fff;
}
.edge { flex: none; height: 8px; margin: 2px 34px 0 35px; border-radius: 12px 12px 0 0; background: linear-gradient(#6a8ad0 0, #86a2e0 3px, #4668bb 4px, #3a5cb0); }
.grip { position: absolute; right: 0; bottom: 0; }

/* Annotations over the windows */
.callout { position: absolute; left: 78px; top: 719px; width: 402px; }
.callout p { position: absolute; left: 0; top: 53px; width: 400px; margin: 0; text-align: center; font: 400 32px/41px Lato, sans-serif; color: #fff; }
.bubble {
  position: absolute;
  left: 1207px;
  top: 748px;
  width: 467px;
  height: 159px;
  display: grid;
  place-items: center;
  background: #4f81bd;
  border: 6px solid #385d8a;
  border-radius: 29px;
}
.bubble p { margin: 7px 0 0; text-align: center; font: 400 47px/61px Lato, sans-serif; letter-spacing: .2px; color: #fff; }

/* Footer */
.follow {
  position: relative;
  flex: none;
  height: 137px;
  display: flex;
  align-items: center;
  gap: 28px;
  padding: 0 0 6px 52px;
  background: #00278f;
}
.rays { position: absolute; left: 0; top: 0; }
.bird, .follow span { position: relative; }
.follow span { padding-bottom: 5px; font: 700 40px/48px Lato, sans-serif; letter-spacing: .5px; color: #fff; white-space: nowrap; }
```
